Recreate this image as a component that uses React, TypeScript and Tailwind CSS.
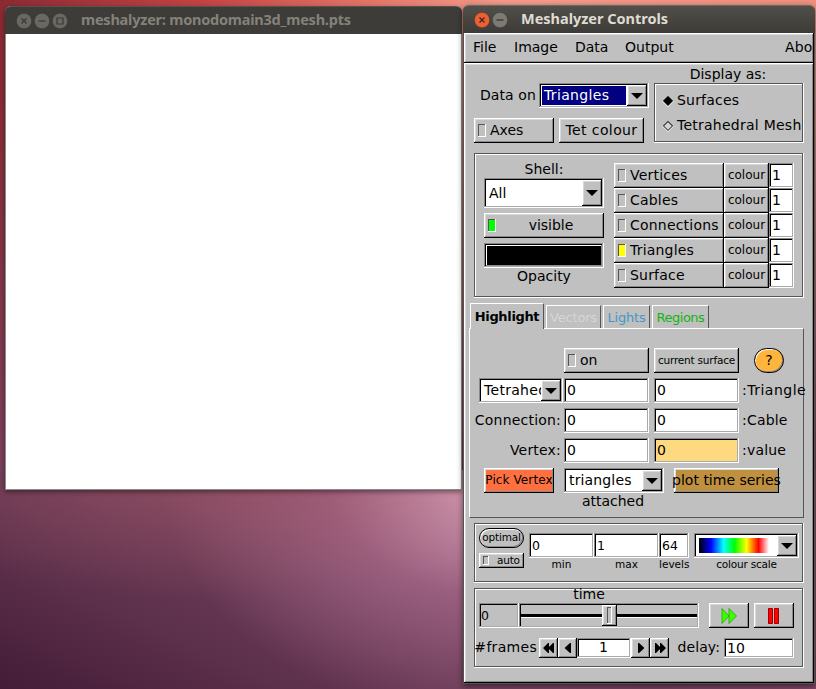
import type { ReactNode } from "react";

const UP =
  "shadow-[inset_-1px_-1px_0_#000,inset_1px_1px_0_#fff,inset_-2px_-2px_0_#8a8a8a,inset_2px_2px_0_#d9d9d9]";
const DOWN =
  "shadow-[inset_-1px_-1px_0_#fff,inset_1px_1px_0_#8a8a8a,inset_-2px_-2px_0_#aaaaaa,inset_2px_2px_0_#000]";
const ENGRAVED =
  "shadow-[inset_-1px_-1px_0_#fff,inset_1px_1px_0_#555,inset_-2px_-2px_0_#555,inset_2px_2px_0_#fff]";

type BoxProps = { height?: string; className?: string; children?: ReactNode };

function Button({ height = "h-[25px]", className = "", children }: BoxProps) {
  return (
    <div className={`flex shrink-0 items-center justify-center whitespace-nowrap ${height} ${UP} ${className}`}>
      {children}
    </div>
  );
}

function Lamp({ size = "h-[13px] w-2", className = "" }: { size?: string; className?: string }) {
  return (
    <span className={`shrink-0 shadow-[inset_-1px_-1px_0_#fff,inset_1px_1px_0_#555] ${size} ${className}`} />
  );
}

function LightButton({ label, className, lamp }: { label: string; className: string; lamp?: string }) {
  return (
    <div className={`flex h-[25px] shrink-0 items-center gap-1 pl-1 whitespace-nowrap ${UP} ${className}`}>
      <Lamp className={lamp} />
      <span>{label}</span>
    </div>
  );
}

function Field({ height = "h-[25px]", className = "", children }: BoxProps) {
  return <div className={`flex shrink-0 items-center pl-[3px] ${height} ${DOWN} ${className}`}>{children}</div>;
}

function Choice({ height = "h-[25px]", className = "", children }: BoxProps) {
  return (
    <div className={`flex shrink-0 items-stretch p-[2px] ${height} ${DOWN} ${className}`}>
      <div className="flex min-w-0 flex-1 items-center overflow-hidden whitespace-nowrap">{children}</div>
      <div className={`flex w-5 shrink-0 items-center justify-center bg-[#c0c0c0] ${UP}`}>
        <svg width="12" height="6" viewBox="0 0 12 6" className="-ml-px">
          <path d="M0 0h12L6 6z" fill="#000" />
        </svg>
      </div>
    </div>
  );
}

function Arrow({ double, flip }: { double?: boolean; flip?: boolean }) {
  return (
    <Button height="h-5" className="w-[19px]">
      <svg width="12" height="10" viewBox="0 0 12 10" className={flip ? "-scale-x-100" : ""}>
        {double ? (
          <path d="M1 0h1l4 4V0h1l5 5-5 5H6V6l-4 4H1z" />
        ) : (
          <path d="M3 0h1l5 4.500v1L4 10H3z" />
        )}
      </svg>
    </Button>
  );
}

function Diamond({ on }: { on?: boolean }) {
  return (
    <svg width="12" height="12" viewBox="0 0 12 12">
      <path d="M0 6L6 0l6 6-6 6z" fill="#fff" />
      <path d="M0 6L6 0l6 6z" fill="#999" />
      <path d="M1.500 6L6 1.500 10.500 6 6 10.500z" fill={on ? "#000" : "#d4d4d4"} stroke="#000" strokeWidth="1" />
    </svg>
  );
}

function TitleIcon({ kind, active }: { kind: "close" | "min" | "max"; active?: boolean }) {
  const hot = active && kind === "close";
  const stroke = active ? "#3a2a24" : "#3a3935";
  return (
    <svg width="16" height="16" viewBox="0 0 16 16">
      <circle cx="8" cy="8" r="7.700" fill={hot ? "#ee6034" : active ? "#7c7a73" : "#696862"} stroke="#35342f" strokeWidth=".5" />
      {kind === "close" && <path d="M5.500 5.500l5 5M10.500 5.500l-5 5" stroke={stroke} strokeWidth="1.300" />}
      {kind === "min" && <path d="M4.500 8h7" stroke={stroke} strokeWidth="1.200" />}
      {kind === "max" && <path d="M5 5h6v6H5z" fill="none" stroke={stroke} strokeWidth="1.200" />}
    </svg>
  );
}

const layers = ["Vertices", "Cables", "Connections", "Triangles", "Surface"];

function CanvasWindow() {
  return (
    <div className="absolute top-[6px] left-[5px] flex h-[484px] w-[457px] flex-col rounded-t-[6px] border-x border-b border-[#8b8b88] bg-white shadow-[0_2px_5px_rgba(0,0,0,0.45)]">
      <div className="-mx-px flex h-7 items-center gap-[2px] rounded-t-[6px] border-t border-[#55544f] bg-[#3d3c38] pl-[11px]">
        <TitleIcon kind="close" />
        <TitleIcon kind="min" />
        <TitleIcon kind="max" />
        <svg width="280" height="24" className="ml-[10px]">
          <text x="1" y="16" textLength="270" fill="#84827b" className="font-['Noto_Sans',sans-serif] text-[14.500px] font-bold">
            meshalyzer: monodomain3d_mesh.pts
          </text>
        </svg>
      </div>
    </div>
  );
}

function TopSection() {
  return (
    <div className="flex h-[90px] pl-[10px]">
      <div className="w-[180px]">
        <div className="mt-5 flex items-center">
          <span className="w-[65px] pr-[3px] text-right tracking-[0.1px] whitespace-nowrap">Data on</span>
          <Choice className="w-[110px] bg-white">
            <span className="ml-px flex h-[19px] flex-1 items-center bg-[#000080] pl-[2px] tracking-[0.35px] text-white">
              Triangles
            </span>
            <span className="w-px" />
          </Choice>
        </div>
        <div className="mt-[10px] flex gap-[5px]">
          <LightButton label="Axes" className="w-20" />
          <Button className="w-[85px] tracking-[0.4px]">Tet colour</Button>
        </div>
      </div>
      <div className="w-[150px]">
        <div className="flex h-5 items-center justify-center pt-[3px] pr-[2px]">Display as:</div>
        <div className={`flex h-[60px] flex-col pt-[5px] pl-2 ${ENGRAVED}`}>
          <div className="flex h-[25px] items-center gap-[3px]">
            <Diamond on />
            <span className="tracking-[0.2px]">Surfaces</span>
          </div>
          <div className="flex h-[25px] items-center gap-[3px] whitespace-nowrap">
            <Diamond />
            <span className="tracking-[0.25px]">Tetrahedral Mesh</span>
          </div>
        </div>
      </div>
    </div>
  );
}

function ShellSection() {
  return (
    <div className={`ml-[10px] flex h-[145px] w-[330px] gap-[10px] pt-[10px] pl-[10px] ${ENGRAVED}`}>
      <div className="w-[120px]">
        <div className="flex h-[15px] items-start justify-center leading-[13px]">Shell:</div>
        <Choice height="h-[30px]" className="w-[120px] bg-white">
          <span className="pl-[3px] leading-[15px]">All</span>
        </Choice>
        <div className={`mt-[5px] flex h-[25px] items-center pl-1 ${UP}`}>
          <Lamp className="bg-[#00ff00]" />
          <span className="flex-1 pl-[2px] text-center">visible</span>
        </div>
        <div className={`mt-[5px] flex h-[25px] w-[120px] p-[2px] ${DOWN}`}>
          <div className="flex-1 bg-black shadow-[inset_-1px_-1px_0_#8a8a8a,inset_1px_1px_0_#fff]" />
        </div>
        <div className="flex h-[17px] items-center justify-center">Opacity</div>
      </div>
      <div>
        {layers.map((name) => (
          <div key={name} className="flex">
            <LightButton
              label={name}
              className="w-[110px] tracking-[0.2px]"
              lamp={name === "Triangles" ? "bg-[#ffff00]" : ""}
            />
            <Button className="w-[45px] text-[12px]">colour</Button>
            <Field className="w-[25px] bg-white">1</Field>
          </div>
        ))}
      </div>
    </div>
  );
}

const TAB = "flex items-center justify-center border-t border-l border-r border-t-white border-l-white border-r-[#555]";

function HighlightSection() {
  return (
    <div className="mt-[5px] ml-[5px] w-[335px]">
      <div className="flex h-[25px] items-end gap-[2px] pl-px">
        <div className={`relative z-10 -mb-px h-[26px] w-[74px] bg-[#c0c0c0] text-[13px] font-bold tracking-[-0.35px] ${TAB}`}>Highlight</div>
        <div className={`h-[23px] w-[55px] text-[13px] tracking-[-0.2px] text-[#d6d6d6] ${TAB}`}>Vectors</div>
        <div className={`h-[23px] w-[47px] text-[13px] tracking-[-0.2px] text-[#4698c4] ${TAB}`}>Lights</div>
        <div className={`h-[23px] w-[57px] text-[13px] tracking-[-0.5px] text-[#12b412] ${TAB}`}>Regions</div>
      </div>
      <div className="flex h-[190px] flex-col gap-[5px] border border-t-white border-r-[#555] border-b-[#555] border-l-white pt-[19px]">
        <div className="flex gap-[5px] pl-[94px]">
          <LightButton label="on" className="w-[85px]" />
          <Button className="w-[85px] text-[10.500px] tracking-[-0.2px]">current surface</Button>
          <div className="ml-[10px] flex h-[25px] w-[30px] items-center justify-center rounded-full border border-black bg-[#ffb43c] text-[14px] shadow-[inset_1px_1px_0_#fff,inset_-1px_-1px_0_#8a8a8a]">
            ?
          </div>
        </div>
        <div className="flex">
          <Choice className="ml-[9px] w-[84px] bg-white">
            <span className="pl-[3px] tracking-[0.3px]">Tetrahedron</span>
          </Choice>
          <Field className="ml-px w-[85px] bg-white">0</Field>
          <Field className="ml-[5px] w-[85px] bg-white">0</Field>
          <span className="pt-1 pl-[3px] tracking-[0.5px]">:Triangle</span>
        </div>
        {[
          ["Connection:", ":Cable", "bg-white"],
          ["Vertex:", ":value", "bg-[#ffd980]"],
        ].map(([left, right, fill]) => (
          <div key={left} className="flex">
            <span className="w-[94px] pt-1 pr-[3px] text-right tracking-[0.2px]">{left}</span>
            <Field className="w-[85px] bg-white">0</Field>
            <Field className={`ml-[5px] w-[85px] ${fill}`}>0</Field>
            <span className="pt-1 pl-[3px] tracking-[0.2px]">{right}</span>
          </div>
        ))}
        <div className="flex pl-[14px]">
          <Button className="w-[70px] bg-[#ff7040] text-[12px] tracking-[0.1px]">Pick Vertex</Button>
          <div className="ml-[10px] w-[100px]">
            <Choice className="w-[100px] bg-white">
              <span className="pl-[3px] tracking-[0.15px]">triangles</span>
            </Choice>
            <div className="flex h-[17px] items-center justify-center pr-[2px]">attached</div>
          </div>
          <Button className="ml-[10px] w-[105px] bg-[#bf903f]">plot time series</Button>
        </div>
      </div>
    </div>
  );
}

function ScaleSection() {
  return (
    <div className={`mt-[5px] ml-[10px] flex h-[60px] w-[330px] pt-[5px] pl-[5px] text-[10.500px] leading-[13px] ${ENGRAVED}`}>
      <div>
        <div className="flex h-5 w-[45px] items-center justify-center rounded-full border border-black pb-px tracking-[-0.2px] shadow-[inset_1px_1px_0_#fff,inset_-1px_-1px_0_#8a8a8a]">
          optimal
        </div>
        <div className={`mt-[5px] flex h-[15px] w-[45px] items-center gap-2 pl-1 tracking-[-0.2px] ${UP}`}>
          <Lamp size="h-[9px] w-[6px]" />
          auto
        </div>
      </div>
      <div className="mt-[5px] ml-[5px] w-[65px] text-center">
        <Field className="bg-white text-[12.500px]">0</Field>
        min
      </div>
      <div className="mt-[5px] w-[65px] text-center">
        <Field className="bg-white text-[12.500px]">1</Field>
        max
      </div>
      <div className="mt-[5px] w-[30px] text-center">
        <Field className="bg-white text-[12.500px]">64</Field>
        levels
      </div>
      <div className="mt-[5px] ml-[5px] w-[105px] text-center tracking-[-0.2px]">
        <Choice className="bg-white">
          <span className="ml-[3px] h-[15px] w-[70px] bg-[linear-gradient(90deg,#000_0%,#00f_17%,#0ff_35%,#0f0_51%,#ff0_68%,#f00_85%,#fff_100%)]" />
        </Choice>
        colour scale
      </div>
    </div>
  );
}

function TimeSection() {
  return (
    <div className={`mt-[5px] ml-[10px] h-20 w-[330px] ${ENGRAVED}`}>
      <div className="flex h-[15px] items-start justify-center pr-[100px] leading-[13px]">time</div>
      <div className="flex pl-[5px]">
        <Field className="w-10 text-[12.500px]">
          <span className="-ml-px">0</span>
        </Field>
        <div className={`flex h-[25px] w-[180px] items-center px-[2px] ${DOWN}`}>
          <div className="box-content h-[3px] w-[81px] border-b border-white bg-black" />
          <div className={`flex h-[21px] w-[15px] items-center justify-center bg-[#c0c0c0] ${UP}`}>
            <div className="h-[17px] w-[5px] shadow-[inset_-1px_-1px_0_#fff,inset_1px_1px_0_#555]" />
          </div>
          <div className="box-content h-[3px] flex-1 border-b border-white bg-black" />
        </div>
        <Button className="ml-[10px] w-10">
          <svg width="16" height="16" viewBox="0 0 16 16" fill="#3cff00" stroke="#16a800" strokeWidth=".8">
            <path d="M1 .5L8 8 1 15.500zM8 .5L15.500 8 8 15.500z" />
          </svg>
        </Button>
        <Button className="ml-[5px] w-10">
          <svg width="12" height="16" viewBox="0 0 12 16" fill="#f00" stroke="#a00000">
            <path d="M.5.5h4v15h-4zM6.500 .5h4v15h-4z" />
          </svg>
        </Button>
      </div>
      <div className="mt-[10px] flex h-5 items-start leading-[19px]">
        <span className="w-[65px] pr-[2px] text-right tracking-[0.3px] whitespace-nowrap">#frames</span>
        <Arrow double flip />
        <Arrow flip />
        <Field height="h-5" className="w-[54px] justify-center bg-white pr-[4px] pb-px">1</Field>
        <Arrow />
        <Arrow double />
        <span className="w-[55px] pr-[4px] text-right tracking-[0.1px]">delay:</span>
        <Field height="h-5" className="w-[70px] bg-white">10</Field>
      </div>
    </div>
  );
}

function ControlsWindow() {
  return (
    <div className="absolute top-[5px] left-[463px] flex h-[679px] w-[352px] flex-col rounded-t-[6px] border-x border-b border-[#55534f] bg-[#c0c0c0] shadow-[0_2px_6px_rgba(0,0,0,0.55)]">
      <div className="-mx-px flex h-7 shrink-0 items-center gap-[2px] rounded-t-[6px] border-t border-[#6b6a64] bg-linear-to-b from-[#504f49] to-[#3c3b37] pl-[11px]">
        <TitleIcon kind="close" active />
        <TitleIcon kind="min" active />
        <svg width="160" height="24" className="ml-[10px]">
          <text x="1" y="16" textLength="147" fill="#dfdbd2" className="font-['Noto_Sans',sans-serif] text-[14.500px] font-bold">
            Meshalyzer Controls
          </text>
        </svg>
      </div>
      <div className={`flex h-[30px] shrink-0 items-center overflow-hidden pb-[2px] pl-[9px] whitespace-nowrap ${UP}`}>
        <span className="w-[41px]">File</span>
        <span className="w-[61px]">Image</span>
        <span className="w-[50px]">Data</span>
        <span className="w-[160px]">Output</span>
        <span className="w-[28px] overflow-hidden tracking-[0.2px]">Abo</span>
      </div>
      <div className={`flex-1 ${UP}`}>
        <TopSection />
        <ShellSection />
        <HighlightSection />
        <ScaleSection />
        <TimeSection />
      </div>
    </div>
  );
}

export default function App() {
  return (
    <div className="relative flex h-[689px] w-[816px] flex-col overflow-hidden font-['DejaVu_Sans',sans-serif] text-[14px] leading-[17px] text-black">
      <div className="h-[470px] bg-[linear-gradient(180deg,transparent_15%,#7c3f5c_100%),linear-gradient(90deg,#8a2a33_0%,#c24444_25%,#e07466_45%,#f49c8c_62%,#f09080_100%)]" />
      <div className="flex-1 bg-[radial-gradient(ellipse_340px_130px_at_25%_0%,rgba(160,85,100,0.6),transparent),radial-gradient(ellipse_330px_250px_at_60%_0%,rgba(232,180,200,0.9),rgba(200,130,165,0.45)_50%,transparent),linear-gradient(25deg,#431c37_0%,#5c2f4a_22%,#6f3f5b_45%,#84496a_70%,#8a4c68_100%)]" />
      <CanvasWindow />
      <ControlsWindow />
    </div>
  );
}
